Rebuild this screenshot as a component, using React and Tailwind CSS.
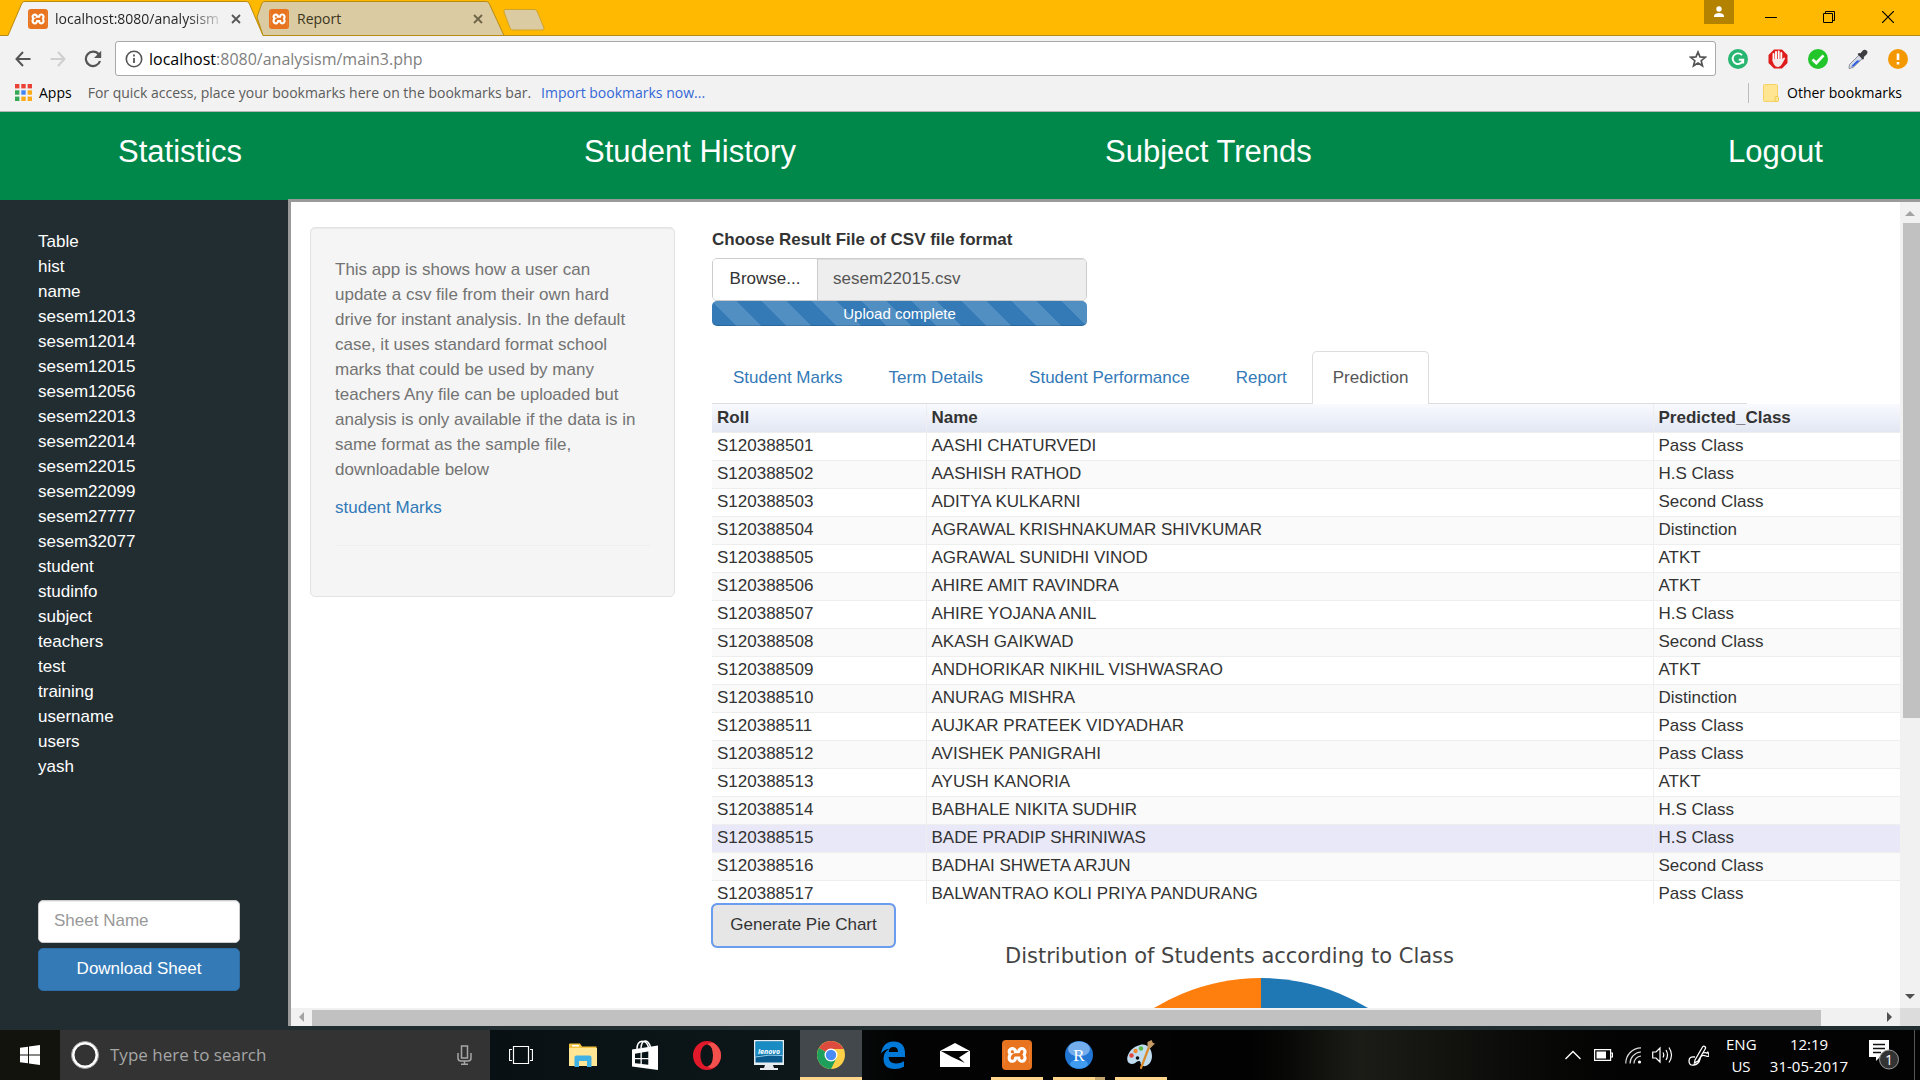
import React from "react";
import { SiXampp } from "react-icons/si";

const tables = [
  "Table", "hist", "name", "sesem12013", "sesem12014", "sesem12015", "sesem12056", "sesem22013",
  "sesem22014", "sesem22015", "sesem22099", "sesem27777", "sesem32077", "student", "studinfo",
  "subject", "teachers", "test", "training", "username", "users", "yash",
];

const rows = [
  ["S120388501", "AASHI CHATURVEDI", "Pass Class"],
  ["S120388502", "AASHISH RATHOD", "H.S Class"],
  ["S120388503", "ADITYA KULKARNI", "Second Class"],
  ["S120388504", "AGRAWAL KRISHNAKUMAR SHIVKUMAR", "Distinction"],
  ["S120388505", "AGRAWAL SUNIDHI VINOD", "ATKT"],
  ["S120388506", "AHIRE AMIT RAVINDRA", "ATKT"],
  ["S120388507", "AHIRE YOJANA ANIL", "H.S Class"],
  ["S120388508", "AKASH GAIKWAD", "Second Class"],
  ["S120388509", "ANDHORIKAR NIKHIL VISHWASRAO", "ATKT"],
  ["S120388510", "ANURAG MISHRA", "Distinction"],
  ["S120388511", "AUJKAR PRATEEK VIDYADHAR", "Pass Class"],
  ["S120388512", "AVISHEK PANIGRAHI", "Pass Class"],
  ["S120388513", "AYUSH KANORIA", "ATKT"],
  ["S120388514", "BABHALE NIKITA SUDHIR", "H.S Class"],
  ["S120388515", "BADE PRADIP SHRINIWAS", "H.S Class"],
  ["S120388516", "BADHAI SHWETA ARJUN", "Second Class"],
  ["S120388517", "BALWANTRAO KOLI PRIYA PANDURANG", "Pass Class"],
];

function XamppIcon({ size }) {
  return (
    <span className={size === "large" ? "grid size-[30px] shrink-0 place-items-center rounded-sm bg-[#e8741f]" : "grid size-5 shrink-0 place-items-center rounded-[3px] bg-[#e8741f]"}>
      <span className={size === "large" ? "grid size-[26px] rounded-md bg-white" : "grid size-[18px] rounded bg-white"}>
        <SiXampp className="size-full text-[#e8741f]" aria-hidden="true" />
      </span>
    </span>
  );
}

function CloseGlyph({ color }) {
  return (
    <svg viewBox="0 0 10 10" className="size-[10px]" aria-hidden="true">
      <path d="M1 1l8 8M9 1l-8 8" stroke={color} strokeWidth="1.800" />
    </svg>
  );
}

function TabStrip() {
  return (
    <div className="relative flex h-9 shrink-0 items-end border-b border-[#b58a1c] bg-[#ffb900]">
      <div className="relative z-10 -mb-px ml-2 h-[35px] w-[255px]">
        <svg viewBox="0 0 255 35" preserveAspectRatio="none" className="absolute inset-0 size-full" aria-hidden="true">
          <path d="M0 35L14 2Q15 .5 17 .5H238Q240 .5 241 2L255 35Z" fill="#f2f2f2" />
          <path d="M0 34.500L14 2Q15 .5 17 .5H238Q240 .5 241 2L255 34.500" fill="none" stroke="#b98a12" />
        </svg>
        <div className="relative flex h-full items-center pr-[22px] pl-5">
          <XamppIcon />
          <span className="ml-[7px] flex-1 overflow-hidden bg-linear-to-r from-[#222] from-80% to-[#ccc] bg-clip-text text-sm whitespace-nowrap text-transparent">
            localhost:8080/analysism
          </span>
          <button aria-label="Close tab" className="ml-3">
            <CloseGlyph color="#555" />
          </button>
        </div>
      </div>
      <div className="relative -mb-px -ml-2 h-[35px] w-[250px]">
        <svg viewBox="0 0 250 35" preserveAspectRatio="none" className="absolute inset-0 size-full" aria-hidden="true">
          <path d="M2 16L7 2Q8 .5 10 .5H231Q233 .5 234 2L249 34.500H8Z" fill="#dacba2" stroke="#b98a12" />
        </svg>
        <div className="relative flex h-full items-center pr-[22px] pl-[14px]">
          <XamppIcon />
          <span className="ml-2 flex-1 text-sm text-[#3c3520]">Report</span>
          <button aria-label="Close tab">
            <CloseGlyph color="#6d6449" />
          </button>
        </div>
      </div>
      <button aria-label="New tab" className="mb-1 -ml-[2px]">
        <svg viewBox="0 0 42 22" className="h-[22px] w-[42px]" aria-hidden="true">
          <path d="M2 .5H31Q33 .5 34 2L41 19Q41.500 21 39 21H10Q8 21 7 19L1 3Q.5.5 2 .5Z" fill="#dacba2" stroke="#d0a32c" />
        </svg>
      </button>
      <div className="ml-auto flex h-full items-start">
        <button aria-label="User" className="grid h-6 w-[30px] place-items-center bg-[#b38200]">
          <svg viewBox="0 0 12 12" className="size-3" aria-hidden="true">
            <circle cx="6" cy="3" r="2.700" fill="#fff" />
            <path d="M1 11V9.500Q2 7 6 7t5 2.500V11Z" fill="#fff" />
          </svg>
        </button>
        <button aria-label="Minimize" className="grid h-[33px] w-[74px] place-items-center">
          <svg viewBox="0 0 12 12" className="size-3" aria-hidden="true"><path d="M0 6.500h12" stroke="#000" /></svg>
        </button>
        <button aria-label="Restore" className="grid h-[33px] w-[42px] place-items-center">
          <svg viewBox="0 0 12 12" className="size-3" aria-hidden="true">
            <path d="M.5 2.500h9v9h-9zM2.500 2.500v-2h9v9h-2" fill="none" stroke="#000" />
          </svg>
        </button>
        <button aria-label="Close window" className="grid h-[33px] w-[70px] place-items-center pl-[6px]">
          <svg viewBox="0 0 12 12" className="size-3" aria-hidden="true"><path d="M0 0l12 12M12 0L0 12" stroke="#000" strokeWidth="1.200" /></svg>
        </button>
      </div>
    </div>
  );
}

function Toolbar() {
  return (
    <div className="flex h-10 shrink-0 items-end bg-[#f2f2f2] pr-3 pl-[15px]">
      <div className="flex h-[35px] items-center">
        <button aria-label="Back">
          <svg viewBox="0 0 16 16" className="size-4" aria-hidden="true"><path d="M15.500 8H1.500M8 1L1.500 8 8 15" fill="none" stroke="#555" strokeWidth="2" /></svg>
        </button>
        <button aria-label="Forward" className="ml-[19px]">
          <svg viewBox="0 0 16 16" className="size-4" aria-hidden="true"><path d="M.5 8h14M8 1l6.500 7L8 15" fill="none" stroke="#cfcfcf" strokeWidth="2" /></svg>
        </button>
        <button aria-label="Reload" className="ml-[18px]">
          <svg viewBox="0 0 18 18" className="size-[18px]" aria-hidden="true">
            <path d="M14.800 4.500A7.200 7.200 0 1 0 16 11" fill="none" stroke="#555" strokeWidth="2.200" />
            <path d="M17.200.8V8H10Z" fill="#555" />
          </svg>
        </button>
      </div>
      <div className="ml-[13px] flex h-[35px] flex-1 items-center rounded-[3px] border border-[#a9a9a9] bg-white pr-2 pl-[9px]">
        <svg viewBox="0 0 18 18" className="size-[18px]" aria-hidden="true">
          <circle cx="9" cy="9" r="7.700" fill="none" stroke="#555" strokeWidth="1.600" />
          <path d="M9 8v5M9 4.500v2" stroke="#555" strokeWidth="1.800" />
        </svg>
        <a href="#main" className="ml-[6px] flex-1 text-base text-[#808080]">
          <span className="text-black">localhost</span>:8080/analysism/main3.php
        </a>
        <button aria-label="Bookmark this page">
          <svg viewBox="0 0 18 18" className="size-[18px]" aria-hidden="true">
            <path d="M9 2l2 4.900 5.200.4-4 3.400 1.300 5.100L9 13l-4.500 2.800 1.300-5.100-4-3.400L7 6.900Z" fill="none" stroke="#555" strokeWidth="1.700" />
          </svg>
        </button>
      </div>
      <div className="ml-3 flex h-[35px] items-center gap-5">
        <button aria-label="Grammarly">
          <svg viewBox="0 0 20 20" className="size-5" aria-hidden="true">
            <circle cx="10" cy="10" r="10" fill="#27b572" />
            <path d="M14 6.200A5.300 5.300 0 1 0 15.200 10.800H10.800M15.200 10.500V14.500" fill="none" stroke="#fff" strokeWidth="1.900" />
          </svg>
        </button>
        <button aria-label="Ad blocker">
          <svg viewBox="0 0 20 20" className="size-5" aria-hidden="true">
            <path d="M6 .5h8l5.500 5.500v8L14 19.500H6L.5 14V6Z" fill="#e01b1b" />
            <path d="M5.500 5v7M8 3v8M10.700 2.500V11M13.300 4v8" stroke="#fff" strokeWidth="1.900" strokeLinecap="round" />
            <path d="M4.600 10H14.200L16 8.500q1.500 0 .8 1.500L14 15q-1.500 3-4 3t-4-2.500Q4.600 13 4.600 10Z" fill="#f5e9e9" />
          </svg>
        </button>
        <button aria-label="Safe site">
          <svg viewBox="0 0 20 20" className="size-5" aria-hidden="true">
            <circle cx="10" cy="10" r="10" fill="#22c52a" />
            <path d="M4.500 10.500l3.800 3.500 7.200-7.700" fill="none" stroke="#fff" strokeWidth="2.700" />
          </svg>
        </button>
        <button aria-label="Color picker">
          <svg viewBox="0 0 20 20" className="size-5" aria-hidden="true">
            <path d="M11 6l3.500 3.500L5 18.500 1 19.500 1.500 15.500Z" fill="#d5dbe6" stroke="#8a8f99" />
            <path d="M9 11.500h3L5.500 17.500 3 17.500Z" fill="#2c5be0" />
            <path d="M9.500 5l1.500-1 1.500.3L15 1.200q2-1.200 3.600.3t.2 3.700L15.800 8l.2 1.500-1.200 1.200Z" fill="#3d3d42" />
          </svg>
        </button>
        <button aria-label="Warning">
          <svg viewBox="0 0 20 20" className="size-5" aria-hidden="true">
            <circle cx="10" cy="10" r="10" fill="#f39800" />
            <path d="M10 4.500v6.500M10 13v2.500" stroke="#fff" strokeWidth="2.600" />
          </svg>
        </button>
      </div>
    </div>
  );
}

const appDots = ["#ea4335", "#ea4335", "#ea4335", "#34a853", "#4285f4", "#fbab18", "#34a853", "#fbab18", "#fbab18"];

function BookmarksBar() {
  return (
    <div className="flex h-9 shrink-0 items-center border-b border-[#b6b4b6] bg-[#f2f2f2] pr-[18px] pb-[2px] pl-[15px] text-sm">
      <a href="#apps" className="flex items-center gap-[7px] text-black">
        <svg viewBox="0 0 17 17" className="size-[17px]" aria-hidden="true">
          {appDots.map((c, i) => (
            <rect key={i} x={(i % 3) * 6.3} y={Math.floor(i / 3) * 6.3} width="4.400" height="4.400" fill={c} />
          ))}
        </svg>
        Apps
      </a>
      <span className="ml-4 text-[#5c5c5c]">For quick access, place your bookmarks here on the bookmarks bar.</span>
      <a href="#import" className="ml-[10px] text-[#3367d6]">Import bookmarks now...</a>
      <div className="ml-auto h-5 w-px bg-[#bdbdbd]" />
      <a href="#other" className="ml-[14px] flex items-center gap-2 text-black">
        <svg viewBox="0 0 16 18" className="h-[18px] w-4" aria-hidden="true">
          <rect x=".5" y=".5" width="14" height="17" rx="1" fill="#ffe591" stroke="#f5d264" />
          <rect x="12" y="12.500" width="3.500" height="5" rx="1" fill="#ffe591" stroke="#efc94c" />
        </svg>
        Other bookmarks
      </a>
    </div>
  );
}

function Header() {
  return (
    <nav className="grid h-[88px] shrink-0 grid-cols-[466fr_521fr_623fr_192fr] items-start bg-[#00874a] pt-[22px] pl-[118px] text-[31px] leading-9 whitespace-nowrap text-white">
      <a href="#statistics">Statistics</a>
      <a href="#history">Student History</a>
      <a href="#trends">Subject Trends</a>
      <a href="#logout">Logout</a>
    </nav>
  );
}

function Sidebar() {
  return (
    <aside className="flex w-72 shrink-0 flex-col px-[38px] pt-[29px] pb-[39px] text-[17px] leading-[25px] text-white">
      <ul>
        {tables.map((t) => <li key={t}>{t}</li>)}
      </ul>
      <form className="mt-auto flex w-[202px] flex-col gap-[5px]" onSubmit={(e) => e.preventDefault()}>
        <input
          aria-label="Sheet Name" placeholder="Sheet Name"
          className="h-[43px] w-full rounded-[5px] border border-[#ccc] bg-white px-[15px] pb-[2px] text-[#555] shadow-[inset_0_1px_1px_rgba(0,0,0,0.075)] placeholder:text-[#999]"
        />
        <button className="h-[43px] rounded-[5px] border border-[#2e6da4] bg-[#337ab7] pb-[2px]">Download Sheet</button>
      </form>
    </aside>
  );
}

function InfoPanel() {
  return (
    <section className="h-[370px] w-[365px] shrink-0 rounded-[5px] border border-[#e3e3e3] bg-[#f5f5f5] px-6 pt-[29px] shadow-[inset_0_1px_1px_rgba(0,0,0,0.05)]">
      <p className="mr-2 text-[#737373]">
        This app is shows how a user can update a csv file from their own hard drive for instant analysis. In the
        default case, it uses standard format school marks that could be used by many teachers Any file can be
        uploaded but analysis is only available if the data is in same format as the sample file, downloadable below
      </p>
      <p className="mt-[13px]">
        <a href="#sample" className="text-[#337ab7]">student Marks</a>
      </p>
      <hr className="mt-[25px] border-[#eee]" />
    </section>
  );
}

const tabs = ["Student Marks", "Term Details", "Student Performance", "Report"];

function MainPanel() {
  return (
    <section className="min-w-0 flex-1">
      <label htmlFor="file" className="block font-bold">Choose Result File of CSV file format</label>
      <div className="mt-[6px] flex h-[43px] w-[375px] overflow-hidden rounded-[5px] border border-[#ccc]">
        <button className="w-[105px] shrink-0 border-r border-[#ccc] bg-white pb-[2px]">Browse...</button>
        <input
          id="file" readOnly defaultValue="sesem22015.csv"
          className="min-w-0 flex-1 bg-[#eee] px-[15px] pb-[2px] text-[#555] shadow-[inset_0_1px_1px_rgba(0,0,0,0.075)]"
        />
      </div>
      <div className="h-[25px] w-[375px] rounded-[5px] bg-[#337ab7] bg-[linear-gradient(45deg,rgba(255,255,255,0.15)_25%,transparent_25%,transparent_50%,rgba(255,255,255,0.15)_50%,rgba(255,255,255,0.15)_75%,transparent_75%,transparent)] bg-size-[50px_50px] text-center text-[15px] text-white shadow-[inset_0_-1px_0_rgba(0,0,0,0.15)]">
        Upload complete
      </div>
      <div className="mt-[25px] mr-[153px] flex h-[53px] items-end border-b border-[#ddd]" role="tablist">
        {tabs.map((t) => (
          <button key={t} role="tab" aria-selected="false" className="mr-1 h-[52px] border border-transparent px-5 text-[#337ab7]">{t}</button>
        ))}
        <button role="tab" aria-selected="true" className="-mb-px h-[53px] rounded-t-[5px] border border-b-0 border-[#ddd] bg-white px-5 pb-[2px] text-[#555]">
          Prediction
        </button>
      </div>
      <div className="h-[500px] overflow-hidden">
        <table className="w-full table-fixed border-collapse text-left leading-6">
          <colgroup>
            <col className="w-[214px]" />
            <col />
            <col className="w-[247px]" />
          </colgroup>
          <thead>
            <tr className="h-7 bg-linear-to-b from-[#f9faff] to-[#e2e7f3]">
              <th className="border-r border-b border-[#eee] px-[5px] py-0">Roll</th>
              <th className="border-r border-b border-[#eee] px-[5px] py-0">Name</th>
              <th className="border-b border-[#eee] px-[5px] py-0">Predicted_Class</th>
            </tr>
          </thead>
          <tbody>
            {rows.map(([roll, name, cls], i) => (
              <tr key={roll} className={i === 14 ? "h-7 bg-[#e8e8f8]" : "h-7 even:bg-[#fafafa]"}>
                <td className="border-r border-b border-[#eee] px-[5px] py-0">{roll}</td>
                <td className="border-r border-b border-[#eee] px-[5px] py-0">{name}</td>
                <td className="border-b border-[#eee] px-[5px] py-0">{cls}</td>
              </tr>
            ))}
          </tbody>
        </table>
      </div>
      <button className="block h-[43px] w-[183px] rounded-[5px] border border-[#8c8c8c] bg-[#e6e6e6] pb-[2px] outline-2 -outline-offset-1 outline-[#6a9cf0]">
        Generate Pie Chart
      </button>
      <figure className="mr-[153px] flex flex-col items-center">
        <figcaption className="-mt-[5px] font-['DejaVu_Sans',sans-serif] text-[21px] leading-7 text-[#444]">
          Distribution of Students according to Class
        </figcaption>
        <svg viewBox="0 0 412 412" className="mt-2 ml-[62px] size-[412px]" role="img" aria-label="Pie chart">
          <path d="M206 0A206 206 0 0 1 206 412Z" fill="#1f77b4" />
          <path d="M206 0A206 206 0 0 0 206 412Z" fill="#ff7f0e" />
        </svg>
      </figure>
    </section>
  );
}

function Arrow({ d, color }) {
  return <svg viewBox="0 0 10 10" className="size-[10px]" aria-hidden="true"><path d={d} fill={color} /></svg>;
}

function Frame() {
  return (
    <main id="main" className="-mt-px mb-1 flex min-h-0 min-w-0 flex-1 flex-col border-t-[3px] border-l-[3px] border-[#9a9a9a] bg-white">
      <div className="flex min-h-0 flex-1">
        <div className="min-h-0 min-w-0 flex-1 overflow-hidden">
          <div className="flex items-start gap-[37px] pt-[25px] pl-[19px] text-[17px] leading-[25px] text-[#333]">
            <InfoPanel />
            <MainPanel />
          </div>
        </div>
        <div className="flex w-5 shrink-0 flex-col items-center bg-[#f1f1f1]">
          <div className="grid h-[21px] place-items-center"><Arrow d="M5 3L10 8H0Z" color="#a3a3a3" /></div>
          <div className="ml-[2px] h-[495px] w-[17px] bg-[#c1c1c1]" />
          <div className="mt-auto grid h-6 place-items-center"><Arrow d="M0 3H10L5 8Z" color="#505050" /></div>
        </div>
      </div>
      <div className="flex h-[18px] shrink-0 bg-[#f1f1f1]">
        <div className="grid w-[21px] place-items-center"><Arrow d="M7 0V10L2 5Z" color="#a3a3a3" /></div>
        <div className="mt-[2px] mr-[57px] flex-1 bg-[#c1c1c1]" />
        <div className="grid w-[22px] place-items-center"><Arrow d="M3 0V10L8 5Z" color="#505050" /></div>
        <div className="w-5 bg-[#dcdcdc]" />
      </div>
    </main>
  );
}

const taskIcons = [
  {
    name: "Task View",
    icon: (
      <svg viewBox="0 0 24 20" className="h-5 w-6"><path d="M4.500 1.500h15v17h-15zM3 4.500H.5v11H3M21 4.500h2.500v11H21" fill="none" stroke="#fff" strokeWidth="1.200" /></svg>
    ),
  },
  {
    name: "File Explorer",
    icon: (
      <svg viewBox="0 0 28 24" className="h-6 w-7">
        <path d="M0 1.500Q0 .5 1 .5h10l2 3h14.500V22H0Z" fill="#f5c344" />
        <path d="M0 5h28v18H0Z" fill="#ffe594" />
        <path d="M3 2h7v1.500H3Z" fill="#fff" />
        <path d="M5.500 24V14.500q0-2 2-2h13q2 0 2 2V24h-4.500v-6h-8v6Z" fill="#3fb1e5" />
      </svg>
    ),
  },
  {
    name: "Store",
    icon: (
      <svg viewBox="0 0 28 30" className="h-[30px] w-7">
        <path d="M6 9Q6 2 11 1.200q5 0 6.500 6M10 8Q10.500 1.500 14 1t5.500 6" fill="none" stroke="#fff" strokeWidth="1.500" />
        <path d="M1 9.500L27 5.500V30L1 26.500Z" fill="#fff" />
        <path d="M4 13.700l5.500-.9V18H4zM10.800 12.600l6.500-1V18h-6.500zM4 19.200h5.500v4.600L4 23.200zM10.800 19.200h6.500v5.600l-6.500-.8z" fill="#071316" />
      </svg>
    ),
  },
  {
    name: "Opera",
    icon: (
      <svg viewBox="0 0 28 29" className="h-[29px] w-7">
        <path fillRule="evenodd" d="M14 0A14 14.500 0 1 1 14 29 14 14.500 0 1 1 14 0ZM14.500 3.500C10 3.500 7.500 8.500 7.500 14.500S10 25.500 14.500 25.500 20 20.500 20 14.500 19 3.500 14.500 3.500Z" fill="#e01a2b" />
        <path d="M14.500 3.500Q18 .5 22 3 28 7.500 28 14.500T22 26Q18 28.500 14.500 25.500 20 24 20 14.500T14.500 3.500Z" fill="#f2504c" />
      </svg>
    ),
  },
  {
    name: "Lenovo",
    icon: (
      <svg viewBox="0 0 30 30" className="size-[30px]">
        <rect width="30" height="25" fill="#e7eef2" />
        <rect x="1.500" y="1.500" width="27" height="21" fill="#0a5c8e" />
        <path d="M1.500 1.500h27V15q-14-2-27 1Z" fill="#1a8cc4" />
        <path d="M1.500 17Q15 14 28.500 15.500" stroke="#8fd0ee" fill="none" />
        <text x="15" y="14" textAnchor="middle" fontSize="7" fontWeight="bold" fontStyle="italic" fill="#fff">lenovo</text>
        <path d="M11 25h8l1 3h4v2H6v-2h4Z" fill="#e4e9ec" />
      </svg>
    ),
  },
  {
    name: "Chrome",
    active: true,
    icon: (
      <svg viewBox="0 0 28 28" className="size-7">
        <circle cx="14" cy="14" r="14" fill="#fdd047" />
        <path d="M14 14L1.900 7A14 14 0 0 1 26.100 7L26 8H14Z" fill="#dd4b3e" />
        <path d="M14 14L1.900 7A14 14 0 0 0 14 28L19.500 17Z" fill="#1e9f5b" />
        <circle cx="14" cy="14" r="6.500" fill="#fff" />
        <circle cx="14" cy="14" r="5.200" fill="#4a8af4" />
      </svg>
    ),
  },
  {
    name: "Edge",
    icon: (
      <svg viewBox="0 0 26 28" className="h-7 w-[26px]">
        <path d="M1 12.500Q3 .5 13.500.5 25 .5 25 12.500V16H8.500Q9 22.500 16 22.500q4.500 0 8-2.200v5.500Q20 28 14.500 28 3.500 28 3.500 17.500 3.500 11 9.500 7.800 4 8.500 1 12.500ZM8.800 11H18Q18 6 13.500 6T8.800 11Z" fill="#0078d7" />
      </svg>
    ),
  },
  {
    name: "Mail",
    icon: (
      <svg viewBox="0 0 30 24" className="h-6 w-[30px]">
        <path d="M0 8L15 0 30 8V24H0Z" fill="#fff" />
        <path d="M1 8H29L19 14.500 25 20 12 14Z" fill="#050505" />
      </svg>
    ),
  },
  { name: "XAMPP", running: true, icon: <XamppIcon size="large" /> },
  {
    name: "RStudio",
    running: true,
    stacked: true,
    icon: (
      <svg viewBox="0 0 28 28" className="size-7">
        <circle cx="14" cy="14" r="14" fill="#2176d4" />
        <ellipse cx="14" cy="8" rx="11" ry="7.500" fill="#74adec" />
        <ellipse cx="14" cy="23" rx="9" ry="4.500" fill="#3f9cf0" />
        <text x="14" y="20" textAnchor="middle" fontSize="17" fontFamily="Liberation Serif, serif" fill="#fff">R</text>
      </svg>
    ),
  },
  {
    name: "Paint",
    running: true,
    icon: (
      <svg viewBox="0 0 30 30" className="size-[30px]">
        <path d="M14 5C21 3 26 9 26 16s-5 11-9 10-1-5-4-5-3 3-7 3-6-4-4-9S8 6.500 14 5Z" fill="#bfdcf0" />
        <circle cx="5.500" cy="15.500" r="2.200" fill="#e2463c" />
        <circle cx="9.500" cy="11" r="2.200" fill="#ef8a2e" />
        <circle cx="15" cy="8.500" r="2.200" fill="#5cb947" />
        <circle cx="11.500" cy="18" r="1.800" fill="#111" />
        <path d="M23 7L15 28" stroke="#d98a2b" strokeWidth="2.200" strokeLinecap="round" />
        <path d="M21.500 2l4-2 1.500 3 2 .5-5 5-2.500-1Z" fill="#c79a64" />
      </svg>
    ),
  },
];

function Taskbar() {
  return (
    <footer className="flex h-[50px] shrink-0 bg-linear-to-r from-[#0d0d0a] via-[#020303] via-50% to-[#040606] text-white">
      <button aria-label="Start" className="grid w-[60px] place-items-center bg-[#13130e]">
        <svg viewBox="0 0 20 20" className="size-5" aria-hidden="true">
          <path d="M0 2.800L8 1.700V9.500H0ZM9 1.500L20 0V9.500H9ZM0 10.500H8V18.300L0 17.200ZM9 10.500H20V20L9 18.500Z" fill="#fff" />
        </svg>
      </button>
      <div className="flex w-[430px] items-center bg-[#333] pr-[17px] pl-[11px]">
        <svg viewBox="0 0 28 28" className="size-7 shrink-0" aria-hidden="true">
          <circle cx="14" cy="14" r="12" fill="none" stroke="#fff" strokeWidth="3" />
          <circle cx="14" cy="14" r="13.500" fill="none" stroke="#999" />
        </svg>
        <input aria-label="Search" placeholder="Type here to search" className="ml-[11px] min-w-0 flex-1 text-[17px] placeholder:text-[#a6a6a6]" />
        <svg viewBox="0 0 16 20" className="h-5 w-4" aria-hidden="true">
          <path d="M4.500 1h6v12h-6zM1 8v5q0 3 3 3h7q3 0 3-3V8M7.500 16v3M4 19.200h7" fill="none" stroke="#a6a6a6" strokeWidth="1.500" />
        </svg>
      </div>
      <div className="flex bg-linear-to-r from-[#081013] via-[#0d1719] via-45% to-[#030303] to-60%">
        {taskIcons.map((t) => (
          <button key={t.name} aria-label={t.name} className={t.active ? "relative grid w-[62px] place-items-center bg-[#42484b]" : "relative grid w-[62px] place-items-center"}>
            {t.icon}
            {t.active && <span className="absolute inset-x-0 bottom-0 h-[3px] bg-[#fdd68c]" />}
            {t.running && <span className="absolute inset-x-[5px] bottom-0 h-[3px] bg-[#fdd68c]" />}
            {t.stacked && <span className="absolute right-[5px] bottom-0 h-[3px] w-[10px] bg-[#c5a66c]" />}
          </button>
        ))}
      </div>
      <div className="flex min-w-0 flex-1 items-center justify-end bg-linear-to-r from-[#020202] from-10% via-[#1c1c17] via-25% to-[#030303] to-60% pr-[5px] text-[15px]">
        <svg viewBox="0 0 16 10" className="h-[10px] w-4" aria-hidden="true"><path d="M.5 9L8 1.500 15.500 9" fill="none" stroke="#fff" strokeWidth="1.400" /></svg>
        <svg viewBox="0 0 19 12" className="ml-[13px] h-3 w-[19px]" aria-hidden="true">
          <path d="M.6.6h16v10.800h-16zM17 4h1.400v4H17" fill="none" stroke="#fff" strokeWidth="1.200" />
          <path d="M2.500 2.500h9.500v7H2.500Z" fill="#fff" />
        </svg>
        <svg viewBox="0 0 17 17" className="ml-3 size-[17px]" aria-hidden="true">
          <path d="M.8 16.500A15.500 15.500 0 0 1 16 .8M5 16.500A11.500 11.500 0 0 1 16 5M9 16.500A7.500 7.500 0 0 1 16 9" fill="none" stroke="#ddd" strokeWidth="1.200" />
          <circle cx="14.500" cy="15" r="1.600" fill="#fff" />
        </svg>
        <svg viewBox="0 0 22 18" className="ml-[10px] h-[18px] w-[22px]" aria-hidden="true">
          <path d="M.7 6h3.300l4-4v14l-4-4H.7ZM11 6.500q1.500 2.500 0 5M14 4q3 5 0 10M17 1.500q5 7.500 0 15" fill="none" stroke="#fff" strokeWidth="1.200" />
        </svg>
        <svg viewBox="0 0 21 21" className="ml-[14px] size-[21px]" aria-hidden="true">
          <path d="M7 15L14.500 2q1-1.500 2.300-.5t.4 2.500L10 16l-3.500 2ZM7 12q-6-1-6 4t5 4 6-6 6-3 1.500-4.500M15 8q3-1 4.500.5" fill="none" stroke="#fff" strokeWidth="1.300" />
        </svg>
        <div className="ml-[17px] w-[30px] text-center leading-[22px]">ENG US</div>
        <div className="ml-[13px] w-20 text-center leading-[22px] whitespace-nowrap">
          <div>12:19</div>
          <div>31-05-2017</div>
        </div>
        <button aria-label="Notifications" className="relative ml-5 h-[30px] w-[30px]">
          <svg viewBox="0 0 30 30" className="size-full" aria-hidden="true">
            <path d="M0 0H20V17H11L7 21V17H0Z" fill="#fff" />
            <path d="M4 4.500h12M4 8.500h12M4 12.500h8" stroke="#111" strokeWidth="1.300" />
            <circle cx="20" cy="19.500" r="9.500" fill="#333" stroke="#999" />
          </svg>
          <span className="absolute right-0 bottom-0 grid size-5 place-items-center text-sm">1</span>
        </button>
        <div className="ml-[15px] h-full w-px bg-[#555]" />
      </div>
    </footer>
  );
}

export default function App() {
  return (
    <div className="flex h-screen flex-col overflow-hidden bg-[#222d32] font-['Open_Sans','Noto_Sans',sans-serif]">
      <TabStrip />
      <Toolbar />
      <BookmarksBar />
      <div className="flex min-h-0 flex-1 flex-col font-['Liberation_Sans',Arial,sans-serif]">
        <Header />
        <div className="flex min-h-0 flex-1">
          <Sidebar />
          <Frame />
        </div>
      </div>
      <Taskbar />
    </div>
  );
}
